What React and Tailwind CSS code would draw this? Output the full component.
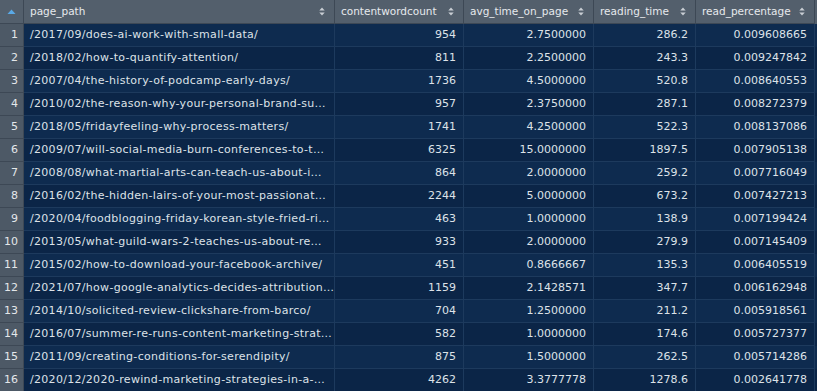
import React from 'react'

const rows = [
  ['/2017/09/does-ai-work-with-small-data/', '954', '2.7500000', '286.2', '0.009608665'],
  ['/2018/02/how-to-quantify-attention/', '811', '2.2500000', '243.3', '0.009247842'],
  ['/2007/04/the-history-of-podcamp-early-days/', '1736', '4.5000000', '520.8', '0.008640553'],
  ['/2010/02/the-reason-why-your-personal-brand-su…', '957', '2.3750000', '287.1', '0.008272379'],
  ['/2018/05/fridayfeeling-why-process-matters/', '1741', '4.2500000', '522.3', '0.008137086'],
  ['/2009/07/will-social-media-burn-conferences-to-t…', '6325', '15.0000000', '1897.5', '0.007905138'],
  ['/2008/08/what-martial-arts-can-teach-us-about-i…', '864', '2.0000000', '259.2', '0.007716049'],
  ['/2016/02/the-hidden-lairs-of-your-most-passionat…', '2244', '5.0000000', '673.2', '0.007427213'],
  ['/2020/04/foodblogging-friday-korean-style-fried-ri…', '463', '1.0000000', '138.9', '0.007199424'],
  ['/2013/05/what-guild-wars-2-teaches-us-about-re…', '933', '2.0000000', '279.9', '0.007145409'],
  ['/2015/02/how-to-download-your-facebook-archive/', '451', '0.8666667', '135.3', '0.006405519'],
  ['/2021/07/how-google-analytics-decides-attribution…', '1159', '2.1428571', '347.7', '0.006162948'],
  ['/2014/10/solicited-review-clickshare-from-barco/', '704', '1.2500000', '211.2', '0.005918561'],
  ['/2016/07/summer-re-runs-content-marketing-strat…', '582', '1.0000000', '174.6', '0.005727377'],
  ['/2011/09/creating-conditions-for-serendipity/', '875', '1.5000000', '262.5', '0.005714286'],
  ['/2020/12/2020-rewind-marketing-strategies-in-a-…', '4262', '3.3777778', '1278.6', '0.002641778'],
]

const headers = ['page_path', 'contentwordcount', 'avg_time_on_page', 'reading_time', 'read_percentage']

function SortArrows() {
  return (
    <svg width="6" height="9" viewBox="0 0 6 9" className="shrink-0">
      <path d="M3 0.5 L5.7 3.5 L0.3 3.5 Z" fill="#c9ced4" />
      <path d="M3 8.5 L5.7 5.5 L0.3 5.5 Z" fill="#c9ced4" />
    </svg>
  )
}

const cols = 'grid grid-cols-[24px_311px_129px_130px_102px_119px]'

export default function App() {
  return (
    <div
      className="w-[817px] h-[391px] overflow-hidden bg-[#0b2444] text-[#dde2e8] text-[11px]"
      style={{ fontFamily: '"DejaVu Sans", sans-serif' }}
    >
      <div className={`${cols} h-[24px] bg-[#535f6c] text-[10.5px] text-[#e6e9ec]`}>
        <div className="flex items-center justify-center border-r border-b border-[#3d4855]">
          <svg width="9" height="6" viewBox="0 0 9 6">
            <path d="M4.5 0.5 L8.5 5 L0.5 5 Z" fill="#5aa9e6" />
          </svg>
        </div>
        {headers.map((h) => (
          <div
            key={h}
            className="flex items-center justify-between pl-[6px] pr-[9px] border-r border-b border-[#3d4855] whitespace-nowrap overflow-hidden"
          >
            <span>{h}</span>
            <SortArrows />
          </div>
        ))}
      </div>
      {rows.map((r, i) => (
        <div
          key={i}
          className={`${cols} h-[23px] ${i % 2 === 0 ? 'bg-[#0e2b4f]' : 'bg-[#0b2547]'}`}
        >
          <div className="flex items-center justify-end pr-[5px] bg-[#4d5966] border-r border-b border-[#3d4855] text-[#e4e7ea]">
            {i + 1}
          </div>
          <div className="flex items-center pl-[6px] border-r border-b border-[#1d3a5d] whitespace-nowrap overflow-hidden tracking-[0.3px]">
            {r[0]}
          </div>
          {r.slice(1).map((v, j) => (
            <div
              key={j}
              className="flex items-center justify-end pr-[7px] border-r border-b border-[#1d3a5d] whitespace-nowrap"
            >
              {v}
            </div>
          ))}
        </div>
      ))}
    </div>
  )
}
